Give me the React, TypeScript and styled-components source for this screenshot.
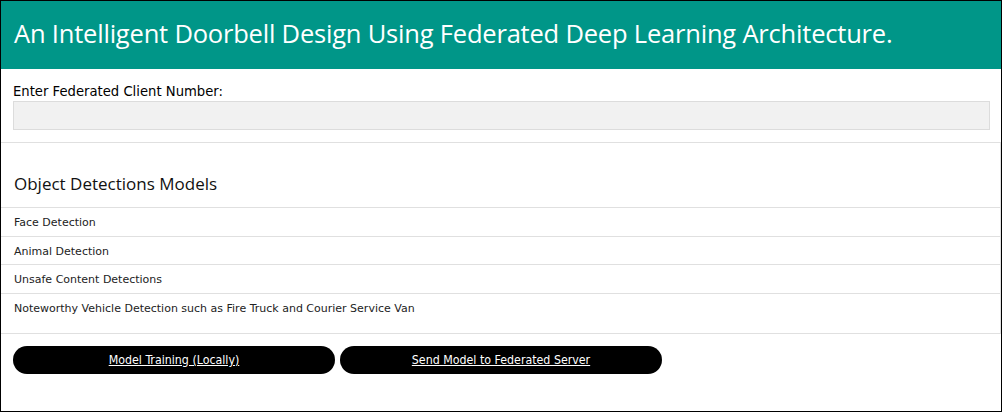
import React from 'react';
import styled, { createGlobalStyle } from 'styled-components';

const GlobalStyle = createGlobalStyle`
  html, body {
    margin: 0;
    padding: 0;
    background: #fff;
  }
  body {
    font-family: 'DejaVu Sans', Verdana, sans-serif;
  }
`;

const Page = styled.div`
  width: 1002px;
  height: 412px;
  box-sizing: border-box;
  border: 1px solid #000;
  overflow: hidden;
  background: #fff;
`;

const Header = styled.header`
  height: 68px;
  background-color: #009688;
  display: flex;
  align-items: center;
  padding: 0 13px;
`;

const Title = styled.h1`
  margin: 0;
  color: #fff;
  font-family: 'Open Sans', 'Noto Sans', sans-serif;
  font-weight: 400;
  font-size: 25.5px;
  letter-spacing: -0.2px;
  padding-bottom: 4px;
  white-space: nowrap;
`;

const Form = styled.div`
  padding: 15px 12px 12px 12px;
  display: flex;
  flex-direction: column;
  gap: 2px;
`;

const Label = styled.label`
  font-size: 13.2px;
  line-height: 15px;
  color: #000;
`;

const Input = styled.input`
  height: 29px;
  box-sizing: border-box;
  width: 977px;
  background: #f1f1f1;
  border: 1px solid #dcdcdc;
  outline: none;
`;

const Panel = styled.section`
  border: 1px solid #e0e0e0;
  border-left: none;
`;

const PanelTitle = styled.h2`
  margin: 0;
  height: 65px;
  display: flex;
  align-items: flex-end;
  padding: 0 13px 12px;
  box-sizing: border-box;
  font-family: 'Open Sans', 'Noto Sans', sans-serif;
  font-weight: 400;
  font-size: 17px;
  line-height: 23px;
  color: #111;
  border-bottom: 1px solid #e0e0e0;
`;

const List = styled.ul`
  list-style: none;
  margin: 0;
  padding: 0;
`;

const Item = styled.li<{ $last?: boolean }>`
  height: ${(p) => (p.$last ? '39px' : '28.7px')};
  box-sizing: border-box;
  padding: 8px 13px 0;
  font-size: 11px;
  color: #222;
  border-bottom: ${(p) => (p.$last ? 'none' : '1px solid #e0e0e0')};
`;

const Actions = styled.div`
  display: flex;
  gap: 5px;
  padding: 12px 12px;
`;

const PillButton = styled.button`
  width: 322px;
  height: 28px;
  border: none;
  border-radius: 14px;
  background: #000;
  color: #fff;
  font-family: 'DejaVu Sans Condensed', 'DejaVu Sans', sans-serif;
  font-size: 12.3px;
  text-decoration: underline;
  cursor: pointer;
`;

const models = [
  'Face Detection',
  'Animal Detection',
  'Unsafe Content Detections',
  'Noteworthy Vehicle Detection such as Fire Truck and Courier Service Van',
];

export default function App() {
  return (
    <Page>
      <GlobalStyle />
      <Header>
        <Title>An Intelligent Doorbell Design Using Federated Deep Learning Architecture.</Title>
      </Header>
      <Form>
        <Label>Enter Federated Client Number:</Label>
        <Input type="text" />
      </Form>
      <Panel>
        <PanelTitle>Object Detections Models</PanelTitle>
        <List>
          {models.map((m, i) => (
            <Item key={m} $last={i === models.length - 1}>
              {m}
            </Item>
          ))}
        </List>
      </Panel>
      <Actions>
        <PillButton>Model Training (Locally)</PillButton>
        <PillButton>Send Model to Federated Server</PillButton>
      </Actions>
    </Page>
  );
}
